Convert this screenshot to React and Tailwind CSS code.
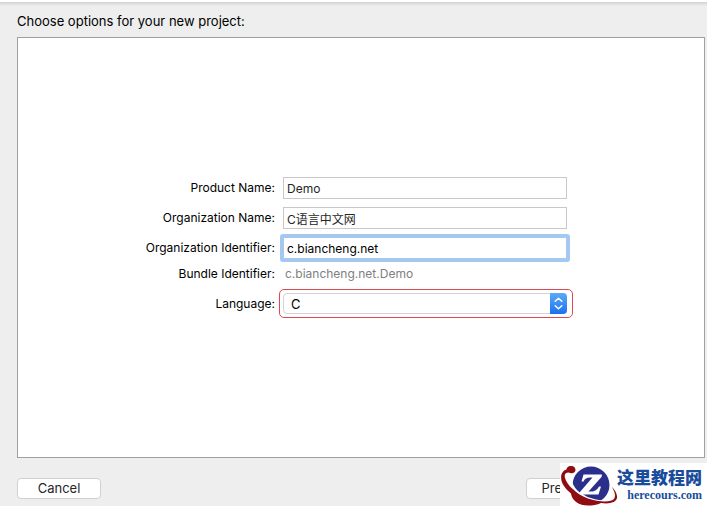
import { useState } from 'react';

const inputClass =
  'h-[22px] w-full border border-[#c8c8c8] bg-white px-[3px] text-[12px] text-[#262626] outline-none';

function Field({ id, label, children }) {
  return (
    <>
      <label htmlFor={id} className="text-right whitespace-nowrap">
        {label}
      </label>
      {children}
    </>
  );
}

function SiteBadge() {
  return (
    <a
      href="#"
      className="absolute right-0 bottom-0 flex h-[43px] w-[147px] items-center bg-white"
    >
      <svg width="57" height="43" viewBox="0 0 57 43" className="shrink-0">
        <circle cx="31" cy="22" r="18.5" fill="#2b2f8c" />
        {/* light gap between the globe and its ring */}
        <path
          d="M11 10 C9 16 11 24 19 30.5 C28 37 41 40 51 38.5"
          fill="none"
          stroke="#fff"
          strokeWidth="2.5"
        />
        <path
          d="M23.5 11.5 H42 L41.5 14 L28.5 28.5 H31 C35 28.5 37 27 39 23.5 H41 L38.5 31.5 H19.5 V29.5 L32.5 14.5 H30 C26.5 14.5 25 15.5 23.5 18.5 H21.5 Z"
          fill="#fff"
        />
        <path
          d="M15.5 7 C15.5 4 13 2.5 10.5 3 C8 3 6.5 5 6.5 6.5 C1 8 -0.5 15 3 21.5 C5 25 8 28 11 30.5 C12 38 19 42.5 28 42.5 C33 42.5 37 42 41 40 C50 41.5 56 39 57 35 C57.5 31 55 27 51.5 23.5 C55 29 56 33 54 36 C51 39.5 39 39 28 35.5 C17 31.5 7 22.5 5 15 C4 11.5 5.5 9.5 8.5 9.5 C12 11 15.5 10 15.5 7 Z"
          fill="#8f0d12"
        />
      </svg>
      <span className="flex flex-col items-end text-[#1a4c9c]">
        <span className="font-['Noto_Sans_CJK_SC',sans-serif] text-[17px] leading-5 font-black">
          这里教程网
        </span>
        <span className="font-['Liberation_Serif',serif] text-[12px] leading-4 font-bold">
          herecours.com
        </span>
      </span>
    </a>
  );
}

export default function App() {
  const [productName, setProductName] = useState('Demo');
  const [orgName, setOrgName] = useState('C语言中文网');
  const [orgId, setOrgId] = useState('c.biancheng.net');
  const [language, setLanguage] = useState('C');

  return (
    <div className="relative flex min-h-screen flex-col border-t-2 border-white bg-[#eeeeee] font-[Inter,'Noto_Sans_CJK_SC',sans-serif] text-black">
      <div className="h-1 bg-linear-to-b from-[#d2d2d2] to-[#eeeeee]" />
      <h1 className="mt-[5px] pl-[17px] text-[13px] leading-5">
        Choose options for your new project:
      </h1>

      <main className="mt-[6px] mr-[2px] ml-[17px] flex flex-1 items-center justify-center border border-[#a0a0a0] bg-white">
        <form className="grid grid-cols-[132px_294px] items-center gap-x-1 gap-y-2 pr-[6px] text-[12px] leading-[14px]">
          <Field id="product" label="Product Name:">
            <div className="pr-[6px] pl-1">
              <input
                id="product"
                className={`${inputClass} block`}
                value={productName}
                onChange={(e) => setProductName(e.target.value)}
              />
            </div>
          </Field>
          <Field id="org" label="Organization Name:">
            <div className="pr-[6px] pl-1">
              <input
                id="org"
                className={`${inputClass} block`}
                value={orgName}
                onChange={(e) => setOrgName(e.target.value)}
              />
            </div>
          </Field>
          <Field id="org-id" label="Organization Identifier:">
            <div className="pr-[6px] pl-1">
              <input
                id="org-id"
                className="block h-[22px] w-full rounded-[1px] border border-[#a5c8f0] bg-white px-[3px] text-[12px] text-black ring-3 ring-[#a5c8f0] outline-none"
                value={orgId}
                onChange={(e) => setOrgId(e.target.value)}
              />
            </div>
          </Field>
          <Field id="bundle" label="Bundle Identifier:">
            <output id="bundle" className="pl-[6px] text-[#808080]">
              {orgId}.{productName}
            </output>
          </Field>
          <Field id="language" label="Language:">
            <div className="h-[29px] rounded-[5px] border border-[#dc4a50] py-[3px] pr-[5px] pl-[3px]">
              <div className="relative">
                <select
                  id="language"
                  className="block h-[21px] w-full appearance-none rounded-[4px] border border-[#d4d4d4] bg-white pl-[7px] text-[13px] outline-none"
                  value={language}
                  onChange={(e) => setLanguage(e.target.value)}
                >
                  <option>C</option>
                  <option>C++</option>
                  <option>Objective-C</option>
                  <option>Swift</option>
                </select>
                <span className="pointer-events-none absolute inset-y-0 right-0 flex w-[17px] items-center justify-center rounded-r-[4px] bg-linear-to-b from-[#5aaaf8] to-[#1a70ee]">
                  <svg
                    width="9"
                    height="13"
                    viewBox="0 0 9 13"
                    fill="none"
                    stroke="#fff"
                    strokeWidth="1.5"
                    strokeLinecap="round"
                    strokeLinejoin="round"
                  >
                    <path d="M1.2 4.2 4.5 1.2 7.8 4.2M1.2 8.8 4.5 11.8 7.8 8.8" />
                  </svg>
                </span>
              </div>
            </div>
          </Field>
        </form>
      </main>

      <footer className="flex justify-between pt-5 pr-[97px] pb-[7px] pl-[17px] text-[13px] leading-[19px]">
        <button className="w-[84px] rounded-[4px] border border-[#d0d0d0] bg-white text-[#262626]">
          Cancel
        </button>
        <button className="w-[84px] rounded-[4px] border border-[#d0d0d0] bg-white text-[#262626]">
          Previous
        </button>
      </footer>

      <SiteBadge />
    </div>
  );
}
